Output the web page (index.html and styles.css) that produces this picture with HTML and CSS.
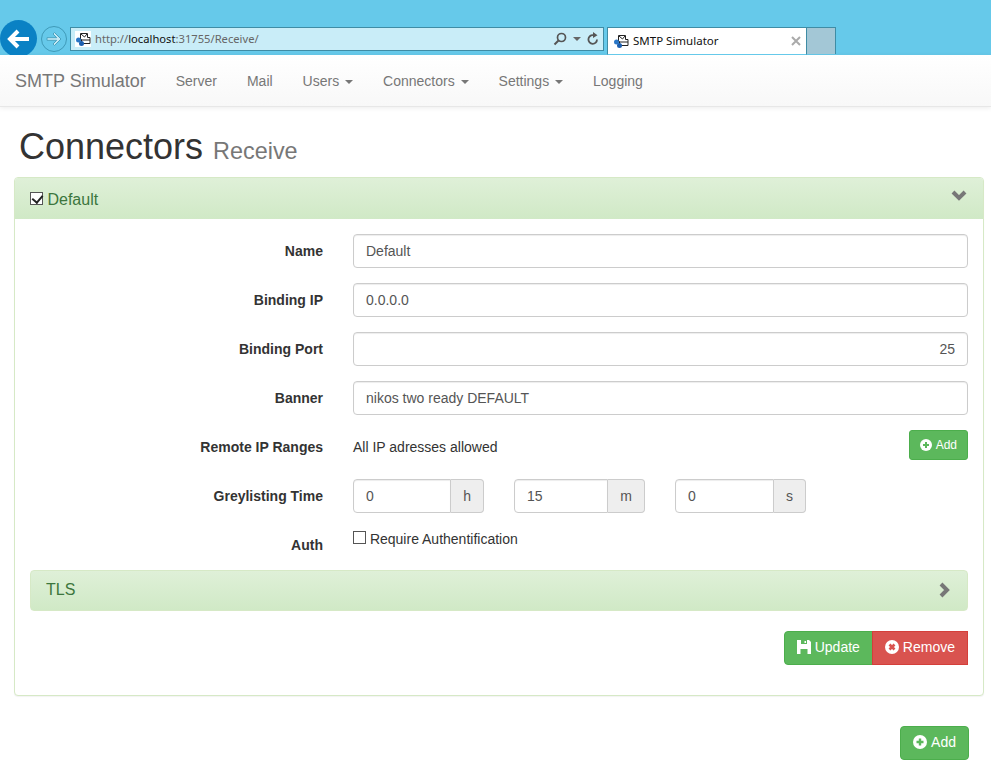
FILE: index.html
```html
<!DOCTYPE html>
<html lang="en">
<head>
<meta charset="UTF-8">
<title>SMTP Simulator</title>
<link rel="stylesheet" href="styles.css">
</head>
<body>
  <!-- browser chrome -->
  <div class="chrome">
    <div class="back-btn">
      <svg width="24" height="20" viewBox="0 0 24 20"><path d="M11 2 3 10l8 8M3 10h19" fill="none" stroke="#fff" stroke-width="4"/></svg>
    </div>
    <div class="forward-btn">
      <svg width="18" height="16" viewBox="0 0 18 16"><path d="M9.500 1.500 16 8l-6.500 6.500-1.500-1.500 3.700-3.700H2V6.700h9.700L8 3z" fill="#c4e9f4" stroke="#4aa3c0" stroke-width="1"/></svg>
    </div>
    <div class="address-bar">
      <svg class="favicon favicon-bg" width="16" height="16" viewBox="0 0 16 16"><path d="M5.500 2.500h7v4h2.500v6H6.500v-4H5.500z" fill="#fff" stroke="#222"/><path d="M6 3l3.500 3L12 3M6.500 9h8.500" fill="none" stroke="#222"/><circle cx="3.500" cy="9" r="2.500" fill="#2a76c6"/><circle cx="6.500" cy="12.500" r="2.500" fill="#1c5fb0"/></svg>
      <span class="url"><span class="url-dim">http://</span>localhost<span class="url-dim">:31755/Receive/</span></span>
      <svg width="14" height="14" viewBox="0 0 14 14"><circle cx="8.500" cy="5.500" r="4" fill="none" stroke="#555" stroke-width="1.700"/><path d="M5.500 8.500 1.500 12.500" stroke="#555" stroke-width="2"/></svg>
      <span class="addr-caret"></span>
      <svg width="12" height="14" viewBox="0 0 12 14"><path d="M10 7.500A4.300 4.300 0 1 1 6 3.200" fill="none" stroke="#555" stroke-width="1.800"/><path d="M6 0l4.500 3.200L6 6z" fill="#555"/></svg>
    </div>
    <div class="tab">
      <svg class="favicon" width="16" height="16" viewBox="0 0 16 16"><path d="M5.500 2.500h7v4h2.500v6H6.500v-4H5.500z" fill="#fff" stroke="#222"/><path d="M6 3l3.500 3L12 3M6.500 9h8.500" fill="none" stroke="#222"/><circle cx="3.500" cy="9" r="2.500" fill="#2a76c6"/><circle cx="6.500" cy="12.500" r="2.500" fill="#1c5fb0"/></svg>
      <span class="tab-title">SMTP Simulator</span>
      <svg width="10" height="10" viewBox="0 0 10 10"><path d="M1 1l8 8M9 1l-8 8" stroke="#aaa" stroke-width="2"/></svg>
    </div>
    <div class="new-tab"></div>
  </div>

  <nav class="navbar">
    <a class="brand" href="#">SMTP Simulator</a>
    <a href="#">Server</a>
    <a href="#">Mail</a>
    <a href="#">Users <span class="caret"></span></a>
    <a href="#">Connectors <span class="caret"></span></a>
    <a href="#">Settings <span class="caret"></span></a>
    <a href="#">Logging</a>
  </nav>

  <div class="container">
    <h1>Connectors <small>Receive</small></h1>

    <div class="panel">
      <div class="panel-heading">
        <label class="panel-title"><input type="checkbox" class="check" checked> Default</label>
        <svg class="chevron" width="16" height="12" viewBox="0 0 16 12"><path d="M2 3l6 6 6-6" fill="none" stroke="#777" stroke-width="4"/></svg>
      </div>
      <div class="panel-body">
        <div class="form-row">
          <label>Name</label>
          <input class="form-control" type="text" value="Default">
        </div>
        <div class="form-row">
          <label>Binding IP</label>
          <input class="form-control" type="text" value="0.0.0.0">
        </div>
        <div class="form-row">
          <label>Binding Port</label>
          <input class="form-control text-right" type="text" value="25">
        </div>
        <div class="form-row">
          <label>Banner</label>
          <input class="form-control" type="text" value="nikos two ready DEFAULT">
        </div>
        <div class="form-row">
          <label>Remote IP Ranges</label>
          <div class="ranges">
            <span>All IP adresses allowed</span>
            <button class="btn btn-success btn-sm">
              <svg class="icon" width="12" height="12" viewBox="0 0 12 12"><circle cx="6" cy="6" r="6" fill="#fff"/><path d="M6 3v6M3 6h6" stroke="#5cb85c" stroke-width="2"/></svg>
              Add
            </button>
          </div>
        </div>
        <div class="form-row">
          <label>Greylisting Time</label>
          <div class="time-groups">
            <div class="input-group"><input class="form-control" type="text" value="0"><span class="addon">h</span></div>
            <div class="input-group"><input class="form-control" type="text" value="15"><span class="addon">m</span></div>
            <div class="input-group"><input class="form-control" type="text" value="0"><span class="addon">s</span></div>
          </div>
        </div>
        <div class="form-row form-row-auth">
          <label>Auth</label>
          <div class="auth"><input type="checkbox" class="check"> Require Authentification</div>
        </div>

        <div class="sub-panel">
          <span>TLS</span>
          <svg class="chevron-right" width="12" height="16" viewBox="0 0 12 16"><path d="M3 2l6 6-6 6" fill="none" stroke="#777" stroke-width="4"/></svg>
        </div>

        <div class="actions">
          <button class="btn btn-success btn-left">
            <svg class="icon" width="14" height="14" viewBox="0 0 14 14"><path d="M0 0h12l2 2v12H0z" fill="#fff"/><path d="M4 0h6v4H4zM3.500 9h7v5h-7z" fill="#5cb85c"/><path d="M7.500 1h1.500v2H7.500z" fill="#fff"/></svg>
            Update
          </button><button class="btn btn-danger">
            <svg class="icon" width="14" height="14" viewBox="0 0 14 14"><circle cx="7" cy="7" r="7" fill="#fff"/><path d="M4.500 4.500l5 5M9.500 4.500l-5 5" stroke="#d9534f" stroke-width="2.600"/></svg>
            Remove
          </button>
        </div>
      </div>
    </div>

    <div class="page-actions">
      <button class="btn btn-success">
        <svg class="icon" width="14" height="14" viewBox="0 0 14 14"><circle cx="7" cy="7" r="7" fill="#fff"/><path d="M7 3.500v7M3.500 7h7" stroke="#5cb85c" stroke-width="2.400"/></svg>
        Add
      </button>
    </div>
  </div>
</body>
</html>
```

FILE: styles.css
```css
* {
  box-sizing: border-box;
}

html, body {
  height: 100%;
  overflow: hidden;
}

body {
  margin: 0;
  font-family: "Liberation Sans", Arial, sans-serif;
  font-size: 14px;
  line-height: 20px;
  color: #333;
  background-color: #fff;
}

/* browser chrome */
.chrome {
  display: flex;
  align-items: flex-start;
  height: 55px;
  padding-top: 27px;
  background-color: #66c9ea;
  overflow: hidden;
}

.back-btn {
  display: flex;
  align-items: center;
  justify-content: center;
  flex: none;
  width: 37px;
  height: 37px;
  margin: -7px 0 0 0;
  border-radius: 50%;
  background-color: #0a81c4;
}

.forward-btn {
  display: flex;
  align-items: center;
  justify-content: center;
  flex: none;
  width: 26px;
  height: 26px;
  margin: -1px 0 0 4px;
  border: 1px solid #3f9ab8;
  border-radius: 50%;
}

.address-bar {
  display: flex;
  align-items: center;
  gap: 5px;
  flex: none;
  width: 534px;
  height: 24px;
  margin-left: 3px;
  padding: 0 4px;
  border: 1px solid #3f8ca5;
  background-color: #c9edf8;
}

.favicon-bg {
  background-color: #fff;
}

.url {
  flex: 1;
  margin-left: -1px;
  font-family: "Noto Sans", sans-serif;
  font-size: 11.2px;
  color: #111;
}

.url-dim {
  color: #666;
}

.addr-caret {
  width: 0;
  height: 0;
  margin: 0 1px;
  border-top: 4px solid #666;
  border-left: 4px solid transparent;
  border-right: 4px solid transparent;
}

.tab {
  display: flex;
  align-items: center;
  flex: none;
  width: 200px;
  height: 28px;
  margin-left: 3px;
  padding: 0 5px 0 5px;
  border: 1px solid #3f8ca5;
  border-bottom: 1px solid #66c9ea;
  background-color: #fff;
}

.tab-title {
  flex: 1;
  margin-left: 4px;
  font-family: "Noto Sans", sans-serif;
  font-size: 11.5px;
  color: #111;
}

.new-tab {
  flex: none;
  width: 29px;
  height: 27px;
  border: 1px solid #3f8ca5;
  border-width: 1px 1px 0 0;
  background-color: #a3c7d6;
}

/* navbar */
.navbar {
  display: flex;
  align-items: center;
  height: 52px;
  background-image: linear-gradient(to bottom, #fff 0, #f8f8f8 100%);
  border-bottom: 1px solid #e7e7e7;
  box-shadow: 0 1px 5px rgba(0, 0, 0, 0.08);
}

.navbar a {
  padding: 15px;
  color: #777;
  text-decoration: none;
}

.navbar .brand {
  font-size: 18px;
}

.caret {
  display: inline-block;
  width: 0;
  height: 0;
  margin-left: 2px;
  vertical-align: middle;
  border-top: 4px solid #777;
  border-left: 4px solid transparent;
  border-right: 4px solid transparent;
}

/* page */
.container {
  padding: 0 7px 0 14px;
}

h1 {
  margin: 20px 0 6px 5px;
  font-size: 36px;
  font-weight: 500;
  line-height: 40px;
}

h1 small {
  font-size: 23.4px;
  font-weight: 400;
  color: #777;
}

.panel {
  height: 519px;
  border: 1px solid #d6e9c6;
  border-radius: 4px;
  background-color: #fff;
  box-shadow: 0 1px 1px rgba(0, 0, 0, 0.05);
}

.panel-heading {
  display: flex;
  align-items: center;
  justify-content: space-between;
  height: 41px;
  padding: 0 15px;
  color: #3c763d;
  background-image: linear-gradient(to bottom, #dff0d8 0, #d0e9c6 100%);
  border-radius: 3px 3px 0 0;
}

.panel-title {
  padding-top: 2px;
  font-size: 16px;
}

.chevron {
  margin: -8px 1px 0 0;
}

.chevron-right {
  margin-right: 2px;
}

.check {
  appearance: none;
  position: relative;
  width: 13px;
  height: 13px;
  margin: 0;
  vertical-align: 0;
  border: 1px solid #555;
  background-color: #fff;
}

.check:checked::after {
  content: "";
  position: absolute;
  left: 3px;
  top: 0;
  width: 5px;
  height: 8px;
  border: solid #222;
  border-width: 0 2px 2px 0;
  transform: rotate(40deg);
}

.panel-body {
  padding: 15px;
}

.form-row {
  display: grid;
  grid-template-columns: 293px 1fr;
  column-gap: 30px;
  min-height: 34px;
  margin-bottom: 15px;
}

.form-row > label {
  padding-top: 7px;
  font-weight: 700;
  text-align: right;
}

.form-control {
  display: block;
  width: 100%;
  height: 34px;
  padding: 6px 12px;
  font-family: inherit;
  font-size: 14px;
  color: #555;
  background-color: #fff;
  border: 1px solid #ccc;
  border-radius: 4px;
  box-shadow: inset 0 1px 1px rgba(0, 0, 0, 0.075);
}

.text-right {
  text-align: right;
}

.ranges {
  display: flex;
  align-items: flex-start;
  justify-content: space-between;
  height: 34px;
}

.ranges span {
  padding-top: 7px;
}

.time-groups {
  display: grid;
  grid-template-columns: repeat(3, 131px);
  column-gap: 30px;
}

.input-group {
  display: flex;
}

.input-group .form-control {
  flex: 1;
  min-width: 0;
  border-radius: 4px 0 0 4px;
}

.addon {
  padding: 6px 12px;
  color: #555;
  background-color: #eee;
  border: 1px solid #ccc;
  border-left: 0;
  border-radius: 0 4px 4px 0;
}

.form-row-auth {
  margin-bottom: 8px;
}

.auth {
  padding-top: 1px;
}

.sub-panel {
  display: flex;
  align-items: center;
  justify-content: space-between;
  height: 41px;
  padding: 0 15px 2px;
  font-size: 16px;
  color: #3c763d;
  background-image: linear-gradient(to bottom, #dff0d8 0, #d0e9c6 100%);
  border: 1px solid #d6e9c6;
  border-radius: 4px;
}

.actions {
  display: flex;
  justify-content: flex-end;
  margin-top: 20px;
}

.btn {
  display: inline-flex;
  align-items: center;
  justify-content: center;
  gap: 4px;
  height: 34px;
  padding: 5px 12px 7px;
  font-family: inherit;
  font-size: 14px;
  color: #fff;
  border: 1px solid transparent;
  border-radius: 4px;
}

.icon {
  margin-top: -1px;
}

.btn-success {
  background-color: #5cb85c;
  border-color: #4cae4c;
}

.btn-danger {
  margin-left: -1px;
  background-color: #d9534f;
  border-color: #d43f3a;
  border-radius: 0;
}

.btn-left {
  border-radius: 4px 0 0 4px;
}

.btn-sm {
  height: 30px;
  padding: 5px 10px;
  font-size: 12px;
  border-radius: 3px;
}

.page-actions {
  display: flex;
  justify-content: flex-end;
  margin: 30px 15px 0 0;
}
```
